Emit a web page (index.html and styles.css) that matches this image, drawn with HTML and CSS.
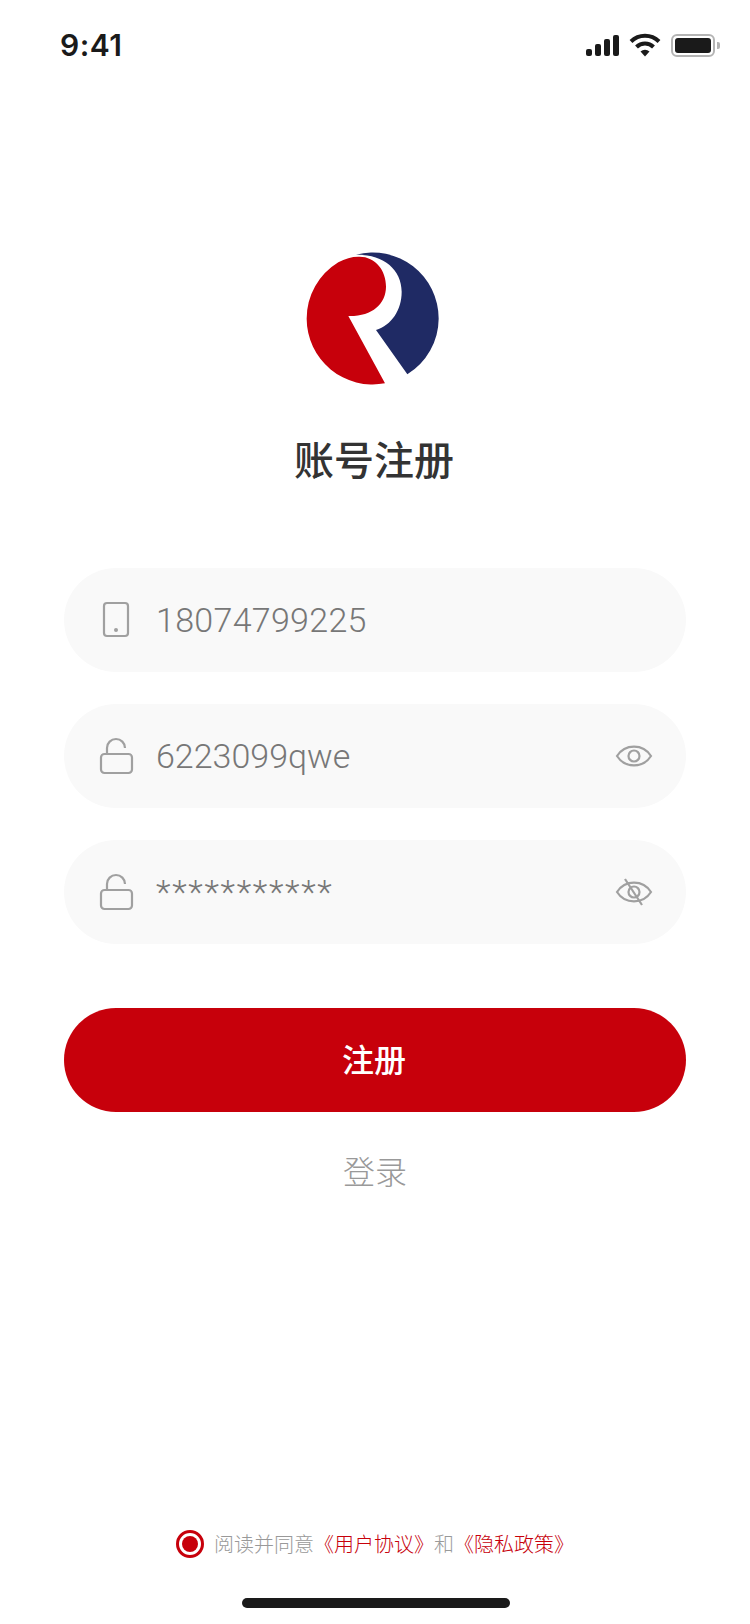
FILE: index.html
```html
<!DOCTYPE html>
<html lang="zh-CN">
<head>
<meta charset="utf-8">
<title>账号注册</title>
<link rel="stylesheet" href="styles.css">
</head>
<body>
<div class="page">
  <header class="status-bar">
    <span class="time">9:41</span>
    <div class="status-icons">
      <div class="signal"><i class="bar b1"></i><i class="bar b2"></i><i class="bar b3"></i><i class="bar b4"></i></div>
      <svg class="wifi" width="32" height="24" viewBox="0 0 32 24"><path class="wifi-arc" d="M2 8.500A20 20 0 0 1 30 8.500"/><path class="wifi-arc" d="M7.500 14A12 12 0 0 1 24.500 14"/><path class="wifi-dot" d="M16 23.500L11.500 18.500A7 7 0 0 1 20.500 18.500Z"/></svg>
      <div class="battery"><div class="battery-fill"></div></div>
      <div class="battery-nub"></div>
    </div>
  </header>

  <svg class="logo" width="190" height="170" viewBox="0 0 570 510">
    <path class="logo-red" d="M235 80C285 78 318 120 318 170C318 222 275 260 205 258L315 460A198 198 0 0 1 80 266A198 198 0 0 1 175 97C195 86 215 80 235 80Z"/>
    <path class="logo-blue" d="M228 74A198 198 0 0 1 476 266A198 198 0 0 1 382 433L288 300C335 285 365 240 365 185C365 118 310 72 228 74Z"/>
  </svg>

  <h1 class="title">账号注册</h1>

  <main class="form">
    <div class="field">
      <svg class="icon" width="40" height="44" viewBox="0 0 40 44"><rect class="line" x="8" y="5" width="24" height="33" rx="3"/><circle class="dot" cx="20" cy="32" r="2"/></svg>
      <span class="value phone">18074799225</span>
    </div>
    <div class="field">
      <svg class="icon" width="40" height="44" viewBox="0 0 40 44"><rect class="line" x="5" y="20" width="31" height="19" rx="3.500"/><path class="line" d="M11 20V14A9 9 0 0 1 29 14"/></svg>
      <span class="value">6223099qwe</span>
      <svg class="eye" width="40" height="40" viewBox="0 0 40 40"><path class="line" d="M3 20C11 7.500 29 7.500 37 20C29 32.500 11 32.500 3 20Z"/><circle class="line" cx="20" cy="20" r="5.500"/></svg>
    </div>
    <div class="field">
      <svg class="icon" width="40" height="44" viewBox="0 0 40 44"><rect class="line" x="5" y="20" width="31" height="19" rx="3.500"/><path class="line" d="M11 20V14A9 9 0 0 1 29 14"/></svg>
      <span class="value stars">***********</span>
      <svg class="eye" width="40" height="40" viewBox="0 0 40 40"><path class="line" d="M3 20C11 7.500 29 7.500 37 20C29 32.500 11 32.500 3 20Z"/><circle class="line" cx="20" cy="20" r="5.500"/><path class="line" d="M11 7L28 33"/></svg>
    </div>
    <button class="submit" type="button"><span class="submit-label">注册</span></button>
    <a class="login">登录</a>
  </main>

  <footer class="footer">
    <div class="agreement">
      <span class="radio"><span class="radio-dot"></span></span>
      <p class="agree-text">阅读并同意<span class="link">《用户协议》</span>和<span class="link">《隐私政策》</span></p>
    </div>
    <div class="home-indicator"></div>
  </footer>
</div>
</body>
</html>
```
FILE: styles.css
```css
* { box-sizing: border-box; }
html, body { margin: 0; padding: 0; background: #fff; }
body { font-family: "Noto Sans CJK SC", "Liberation Sans", sans-serif; }
.page { width: 750px; height: 1624px; display: flex; flex-direction: column; align-items: center; overflow: hidden; }

.status-bar { width: 100%; height: 90px; display: flex; justify-content: space-between; align-items: center; padding: 0 30px 0 60px; }
.time { font-family: "Inter", sans-serif; font-weight: 600; font-size: 30px; color: #1a1a1a; letter-spacing: 0.5px; }
.status-icons { display: flex; align-items: center; }
.signal { display: flex; align-items: flex-end; gap: 3px; height: 21px; margin-right: 10px; }
.bar { display: block; width: 6px; background: #1a1a1a; border-radius: 2px; }
.b1 { height: 7px; }
.b2 { height: 12px; }
.b3 { height: 17px; }
.b4 { height: 21px; }
.wifi { margin-right: 10px; }
.wifi-arc { fill: none; stroke: #1a1a1a; stroke-width: 4; }
.wifi-dot { fill: #1a1a1a; }
.battery { width: 44px; height: 23px; border: 2px solid #b4b4b4; border-radius: 6px; padding: 2px; }
.battery-fill { width: 100%; height: 100%; background: #1a1a1a; border-radius: 3px; }
.battery-nub { width: 3px; height: 7px; background: #b4b4b4; border-radius: 0 2px 2px 0; margin-left: 2px; }

.logo { display: block; margin-top: 140px; flex: none; }
.logo-red { fill: #c7000b; }
.logo-blue { fill: #1f2a64; }

.title { margin: 28px 2px 2px 0; font-size: 40px; line-height: 60px; font-weight: 500; color: #333; }

.form { width: 622px; margin-top: 78px; display: flex; flex-direction: column; align-items: center; gap: 32px; }
.field { width: 100%; height: 104px; border-radius: 52px; background: #f9f9f9; display: flex; align-items: center; padding: 0 32px; gap: 20px; }
.icon { flex: none; display: block; }
.eye { flex: none; display: block; margin-left: auto; }
.line { fill: none; stroke: #a0a0a0; stroke-width: 2.2; }
.dot { fill: #a0a0a0; }
.value { font-family: "Roboto", "Liberation Sans", sans-serif; font-weight: 300; font-size: 34px; line-height: 44px; color: #777; }
.phone { letter-spacing: 0.3px; }
.stars { letter-spacing: 1.7px; }
.submit { width: 100%; height: 104px; margin-top: 32px; padding: 0 0 4px; border: 0; border-radius: 52px; background: #c7000b; color: #fff; font-family: inherit; font-size: 32px; font-weight: 500; }
.submit-label { display: block; margin-right: 2px; }
.login { margin-top: -4px; font-size: 32px; line-height: 60px; font-weight: 300; color: #999; }

.footer { margin-top: auto; width: 100%; display: flex; flex-direction: column; align-items: center; }
.agreement { display: flex; align-items: center; gap: 10px; height: 28px; }
.radio { width: 28px; height: 28px; border: 3px solid #c7000b; border-radius: 50%; display: flex; align-items: center; justify-content: center; background: #fff; flex: none; }
.radio-dot { width: 16px; height: 16px; border-radius: 50%; background: #c7000b; }
.agree-text { margin: 0; font-size: 20px; line-height: 28px; font-weight: 300; color: #999; white-space: nowrap; }
.link { color: #c7000b; }
.home-indicator { width: 268px; height: 10px; margin: 40px 0 16px 2px; background: #1a1a1a; border-radius: 5px; }
```
